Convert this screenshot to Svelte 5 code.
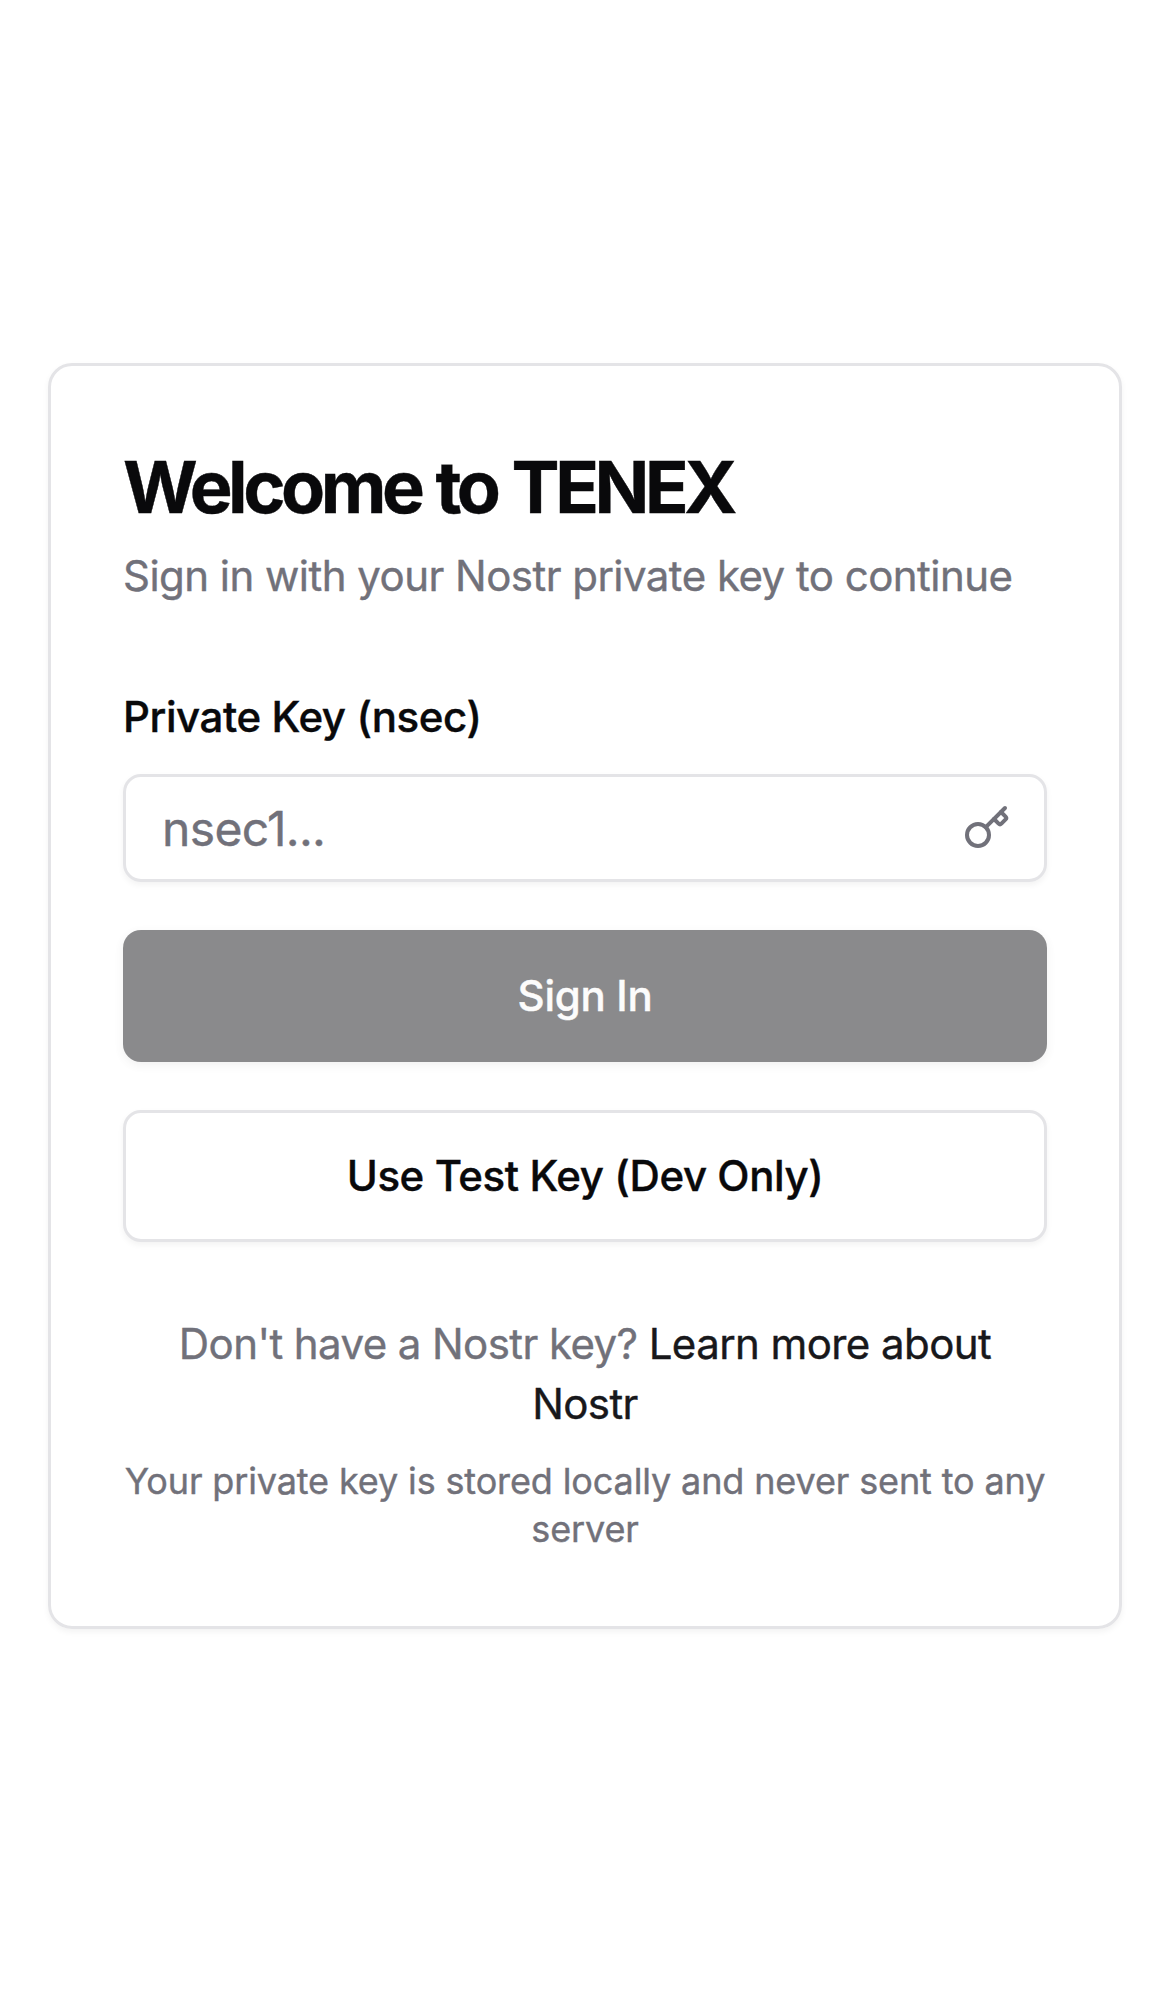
<script>
  let nsec = $state('');
  let canSignIn = $derived(nsec.trim().length > 0);
</script>

<main class="page">
  <section class="card">
    <header class="header">
      <h1 class="title">Welcome to TENEX</h1>
      <p class="description">Sign in with your Nostr private key to continue</p>
    </header>

    <form class="form" onsubmit={(e) => e.preventDefault()}>
      <div class="field">
        <label class="label" for="nsec">Private Key (nsec)</label>
        <div class="control">
          <input class="input" id="nsec" type="text" placeholder="nsec1..." bind:value={nsec} />
          <svg class="key" viewBox="0 0 24 24" aria-hidden="true">
            <path d="m15.5 7.5 2.3 2.3a1 1 0 0 0 1.4 0l2.1-2.1a1 1 0 0 0 0-1.4L19 4" />
            <path d="m21 2-9.6 9.6" />
            <circle cx="7.5" cy="15.5" r="5.5" />
          </svg>
        </div>
      </div>
      <button class="button primary" type="submit" disabled={!canSignIn}>Sign In</button>
      <button class="button outline" type="button">Use Test Key (Dev Only)</button>
    </form>

    <footer class="footer">
      <p class="help">Don't have a Nostr key? <a class="link" href="#nostr">Learn more about Nostr</a></p>
      <p class="note">Your private key is stored locally and never sent to any server</p>
    </footer>
  </section>
</main>

<style>
  :global(body) {
    background: #fff;
  }

  .page {
    box-sizing: border-box;
    min-height: 1992px;
    padding: 48px;
    display: flex;
    align-items: center;
    justify-content: center;
    font-family: Inter, sans-serif;
    color: #09090b;
    -webkit-text-stroke-width: 0.4px;
  }

  .card {
    box-sizing: border-box;
    width: 100%;
    padding: 72px;
    display: flex;
    flex-direction: column;
    gap: 72px;
    border: 3px solid #e4e4e7;
    border-radius: 24px;
    box-shadow: 0 3px 6px rgba(0, 0, 0, 0.05);
  }

  .header {
    display: flex;
    flex-direction: column;
    gap: 12px;
  }

  .title,
  .description,
  .help,
  .note {
    margin: 0;
  }

  .title {
    height: 96px;
    font-size: 72px;
    line-height: 98px;
    font-weight: 700;
    letter-spacing: -4.45px;
    word-spacing: 2.5px;
    white-space: nowrap;
  }

  .description {
    font-size: 42px;
    line-height: 60px;
    letter-spacing: -0.534px;
    color: #71717a;
    white-space: nowrap;
  }

  .form {
    display: flex;
    flex-direction: column;
    gap: 48px;
  }

  .field {
    display: flex;
    flex-direction: column;
    gap: 24px;
  }

  .label {
    padding-top: 5px;
    font-size: 42px;
    line-height: 67px;
    font-weight: 500;
    letter-spacing: -0.4px;
  }

  .control {
    position: relative;
    display: flex;
  }

  .input {
    box-sizing: border-box;
    width: 100%;
    height: 108px;
    padding: 0 120px 0 36px;
    border: 3px solid #e4e4e7;
    border-radius: 18px;
    outline: none;
    background: transparent;
    box-shadow: 0 3px 6px rgba(0, 0, 0, 0.05);
    font: 400 48px Inter, sans-serif;
    letter-spacing: -0.65px;
    color: inherit;
  }

  .input::placeholder {
    color: #71717a;
    opacity: 1;
  }

  .key {
    position: absolute;
    top: 30px;
    right: 36px;
    width: 48px;
    height: 48px;
    fill: none;
    stroke: #71717a;
    stroke-width: 2;
    stroke-linecap: round;
    stroke-linejoin: round;
  }

  .button {
    box-sizing: border-box;
    height: 132px;
    padding: 0 0 2px;
    border: 0;
    border-radius: 18px;
    font: 500 42px Inter, sans-serif;
    letter-spacing: -0.42px;
    box-shadow: 0 3px 6px rgba(0, 0, 0, 0.05);
  }

  .primary {
    background: #18181b;
    color: #fafafa;
    letter-spacing: -0.3px;
    box-shadow: 0 3px 9px rgba(0, 0, 0, 0.1);
  }

  .primary:disabled {
    opacity: 0.5;
  }

  .outline {
    border: 3px solid #e4e4e7;
    background: #fff;
    color: #09090b;
  }

  .footer {
    display: flex;
    flex-direction: column;
    gap: 23px;
    padding-bottom: 1px;
    text-align: center;
    color: #71717a;
  }

  .help {
    font-size: 42px;
    line-height: 60px;
    letter-spacing: -0.58px;
  }

  .link {
    color: #18181b;
    text-decoration: none;
  }

  .note {
    font-size: 36px;
    line-height: 48px;
    letter-spacing: -0.13px;
  }
</style>
